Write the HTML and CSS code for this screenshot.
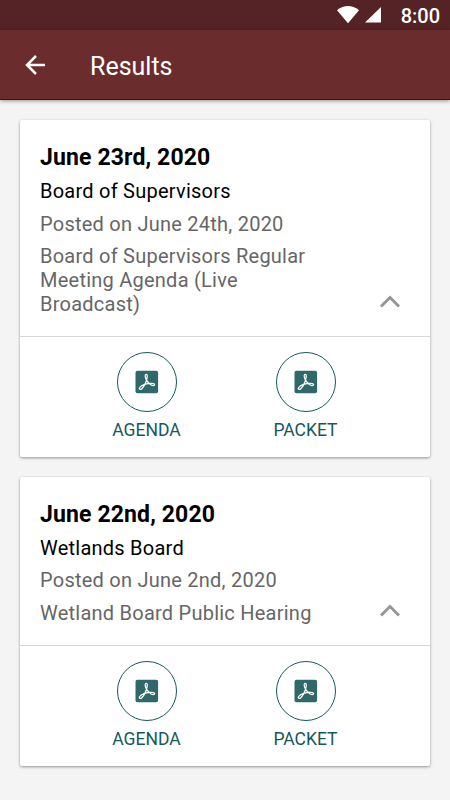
FILE: index.html
```html
<!DOCTYPE html>
<html lang="en">
<head>
<meta charset="utf-8">
<title>Results</title>
<link rel="stylesheet" href="styles.css">
</head>
<body>
<svg class="defs" aria-hidden="true">
  <symbol id="pdf" viewBox="0 0 24 24">
    <rect x=".5" y=".7" width="22.6" height="22.6" rx="2" fill="#30686a"/>
    <path d="M10.7 4.5c1.6-.6 1.9 1.2 1.3 3.700-.9 4-3.100 8.600-5.200 10.600-1.400 1.300-3.300.4-2.100-1.300 1.800-2.500 7.300-4.300 11.800-4.100 2.700.1 3.700 1 2.700 1.900-1.400 1.200-5.300-1.400-7.200-4.400-1.500-2.400-2.500-5.800-1.300-6.400z" fill="none" stroke="#fff" stroke-width="1.250"/>
  </symbol>
  <symbol id="chevron" viewBox="0 0 22 14">
    <path d="M2 11.500 11 2.500l9 9" fill="none" stroke="#969696" stroke-width="2.900"/>
  </symbol>
</svg>
<div class="status">
  <svg class="wifi" viewBox="0 0 22 18"><path d="M0 4.300Q11-4.100 22 4.300L11 17.300z" fill="#fff"/></svg>
  <svg class="signal" viewBox="0 0 16 16"><path d="M16 0v15.500H0z" fill="#fff"/></svg>
  <span class="clock">8:00</span>
</div>
<header class="bar">
  <svg class="back" viewBox="0 0 20 20"><path d="M20 10H2M11 1 2 10l9 9" fill="none" stroke="#fff" stroke-width="2.500"/></svg>
  <h1>Results</h1>
</header>
<main>
  <article class="card">
    <div class="info">
      <div class="text">
        <h2>June 23rd, 2020</h2>
        <p class="board">Board of Supervisors</p>
        <p>Posted on June 24th, 2020</p>
        <p>Board of Supervisors Regular Meeting Agenda (Live Broadcast)</p>
      </div>
      <svg class="chevron"><use href="#chevron"/></svg>
    </div>
    <div class="actions">
      <a class="action"><span class="ring"><svg class="pdf"><use href="#pdf"/></svg></span><span class="label">AGENDA</span></a>
      <a class="action"><span class="ring"><svg class="pdf"><use href="#pdf"/></svg></span><span class="label">PACKET</span></a>
    </div>
  </article>
  <article class="card">
    <div class="info">
      <div class="text">
        <h2>June 22nd, 2020</h2>
        <p class="board">Wetlands Board</p>
        <p>Posted on June 2nd, 2020</p>
        <p>Wetland Board Public Hearing</p>
      </div>
      <svg class="chevron"><use href="#chevron"/></svg>
    </div>
    <div class="actions">
      <a class="action"><span class="ring"><svg class="pdf"><use href="#pdf"/></svg></span><span class="label">AGENDA</span></a>
      <a class="action"><span class="ring"><svg class="pdf"><use href="#pdf"/></svg></span><span class="label">PACKET</span></a>
    </div>
  </article>
</main>
</body>
</html>
```
FILE: styles.css
```css
* { box-sizing: border-box; }
body {
  margin: 0;
  height: 800px;
  overflow: hidden;
  background: #f4f4f4;
  font-family: Roboto, sans-serif;
  color: #000;
}
h1, h2, p { margin: 0; }
.defs { display: none; }
.status {
  display: flex;
  align-items: center;
  justify-content: flex-end;
  height: 30px;
  padding-right: 10px;
  background: #552325;
  color: #fff;
}
.wifi { width: 22px; height: 18px; margin-right: 6px; }
.signal { width: 16px; height: 16px; margin-right: 20px; }
.clock { font-size: 20px; font-weight: 500; line-height: 30px; padding-top: 1px; }
.bar {
  display: flex;
  align-items: center;
  height: 70px;
  padding-left: 25px;
  background: #6b2c2e;
  border-bottom: 1px solid #520a0c;
  box-shadow: 0 1px 4px rgba(0, 0, 0, .4);
  color: #fff;
}
.back { width: 20px; height: 20px; margin-right: 45px; }
h1 { font-size: 25px; font-weight: 400; line-height: 30px; padding-top: 5px; }
main { display: flex; flex-direction: column; gap: 20px; padding: 20px; }
.card {
  background: #fff;
  border-radius: 2px;
  box-shadow: 0 1px 3px rgba(0, 0, 0, .4);
}
.info {
  display: flex;
  align-items: flex-end;
  justify-content: space-between;
  padding: 23px 29px 19px 20px;
  border-bottom: 1px solid #d8d8d8;
}
.text { width: 290px; }
h2 { font-size: 23px; font-weight: 700; line-height: 30px; letter-spacing: .13px; margin-bottom: 7px; }
.text p { font-size: 20px; line-height: 23.700px; letter-spacing: .24px; color: #666; margin-bottom: 9px; }
.text p:last-child { margin-bottom: 0; }
.text .board { color: #000; }
.chevron { width: 22px; height: 14px; margin-bottom: 8px; }
.actions {
  display: flex;
  justify-content: center;
  height: 120px;
  padding: 15.500px 0 0 2px;
}
.action { display: flex; flex-direction: column; align-items: center; width: 159px; }
.ring {
  display: flex;
  align-items: center;
  justify-content: center;
  width: 60px;
  height: 60px;
  border: 1.250px solid #16595b;
  border-radius: 50%;
}
.pdf { width: 24px; height: 24px; }
.label { margin-top: 8px; font-size: 17.500px; line-height: 21px; color: #16595b; }
```
